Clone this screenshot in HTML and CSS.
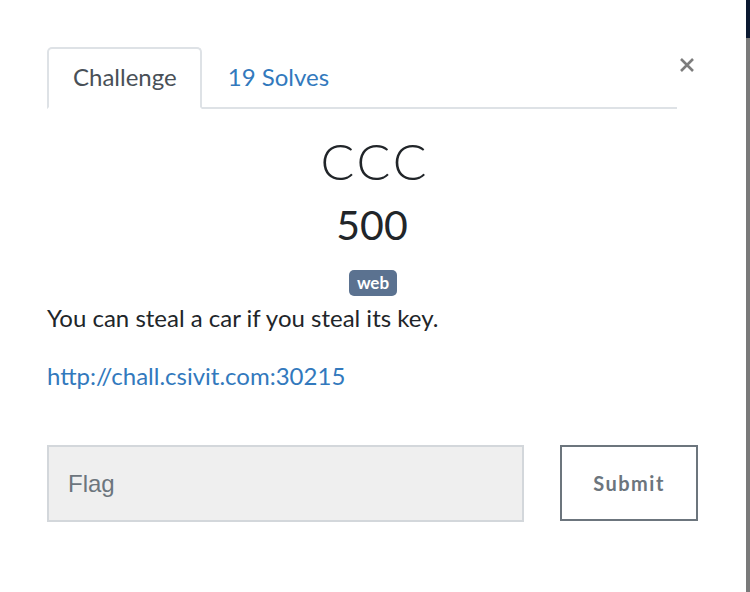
FILE: index.html
```html
<!DOCTYPE html>
<html lang="en">
<head>
<meta charset="utf-8">
<title>CCC</title>
<link rel="stylesheet" href="styles.css">
</head>
<body>
<div class="page">
  <div class="modal">
    <div class="modal-header">
      <ul class="tabs">
        <li class="tab active">Challenge</li>
        <li class="tab link">19 Solves</li>
      </ul>
      <button class="close" aria-label="Close">
        <svg width="16" height="16" viewBox="0 0 16 16"><path d="M2 2 L14 14 M14 2 L2 14" stroke="#7d7d7d" stroke-width="2.6" stroke-linecap="butt"/></svg>
      </button>
    </div>
    <div class="modal-body">
      <h3 class="title">CCC</h3>
      <h4 class="value">500</h4>
      <div class="tags"><span class="badge">web</span></div>
      <p class="desc">You can steal a car if you steal its key.</p>
      <p class="desc"><a class="url" href="#">http://chall.csivit.com:30215</a></p>
      <form class="flag-row">
        <input class="flag-input" type="text" placeholder="Flag">
        <button class="submit" type="button">Submit</button>
      </form>
    </div>
  </div>
  <div class="edge">
    <div class="edge-top"></div>
    <div class="edge-bottom"></div>
  </div>
</div>
</body>
</html>
```

FILE: styles.css
```css
html, body {
  margin: 0;
  padding: 0;
  background: #ffffff;
}
body {
  font-family: "Lato", "Noto Sans", sans-serif;
  color: #212529;
}
.page {
  display: flex;
  height: 592px;
  overflow: hidden;
}
.modal {
  flex: 1;
  padding: 47px 49px 0 47px;
  background: #ffffff;
}
.edge {
  width: 4px;
  display: flex;
  flex-direction: column;
}
.edge-top {
  height: 38px;
  background: #0b1931;
}
.edge-bottom {
  flex: 1;
  background: #7a7a7a;
}
.modal-header {
  display: flex;
  align-items: flex-start;
}
.tabs {
  list-style: none;
  margin: 0;
  padding: 0;
  display: flex;
  width: 630px;
  border-bottom: 2px solid #dee2e6;
}
.tab {
  font-size: 24px;
  line-height: 28px;
  padding: 14px 25px 16px 25px;
  border: 2px solid transparent;
  border-top-left-radius: 5px;
  border-top-right-radius: 5px;
  margin-bottom: -2px;
}
.tab.active {
  color: #495057;
  border: 2px solid #dee2e6;
  border-bottom-color: #ffffff;
  padding: 14px 23px 16px 24px;
}
.tab.link {
  color: #3279bd;
  padding-left: 24px;
}
.close {
  background: none;
  border: 0;
  padding: 0;
  margin: 10px 0 0 2px;
  width: 16px;
  height: 16px;
  display: flex;
}
.modal-body {
  padding-top: 25px;
}
.title {
  margin: 0;
  text-align: center;
  font-weight: 300;
  font-size: 50px;
  line-height: 54px;
  letter-spacing: 3px;
  text-indent: 6px;
  color: #212529;
}
.value {
  margin: 12px 0 0 0;
  text-align: center;
  font-weight: 400;
  font-size: 41px;
  line-height: 50px;
  color: #212529;
}
.tags {
  text-align: center;
  margin-top: 20px;
  line-height: 26px;
}
.badge {
  display: inline-block;
  background: #5b7290;
  color: #ffffff;
  font-weight: 700;
  font-size: 17px;
  line-height: 26px;
  padding: 0 8px;
  border-radius: 5px;
  margin-left: 2px;
}
.desc {
  margin: 6px 0 0 0;
  font-size: 24px;
  line-height: 32px;
  color: #212529;
}
.desc + .desc {
  margin-top: 26px;
}
.url {
  color: #3279bd;
  text-decoration: none;
}
.flag-row {
  display: flex;
  justify-content: space-between;
  margin-top: 53px;
}
.flag-input {
  box-sizing: border-box;
  width: 477px;
  height: 77px;
  background: #efefef;
  border: 2px solid #d3d7db;
  padding: 0 19px;
  font-family: "Liberation Sans", Arial, sans-serif;
  font-size: 24px;
  color: #495057;
  outline: none;
}
.flag-input::placeholder {
  color: #6c757d;
}
.submit {
  box-sizing: border-box;
  width: 138px;
  height: 76px;
  margin-right: -1px;
  background: #ffffff;
  border: 2px solid #6c757d;
  color: #6c757d;
  font-family: "Lato", sans-serif;
  font-weight: 700;
  font-size: 20px;
  letter-spacing: 1.5px;
}
```
